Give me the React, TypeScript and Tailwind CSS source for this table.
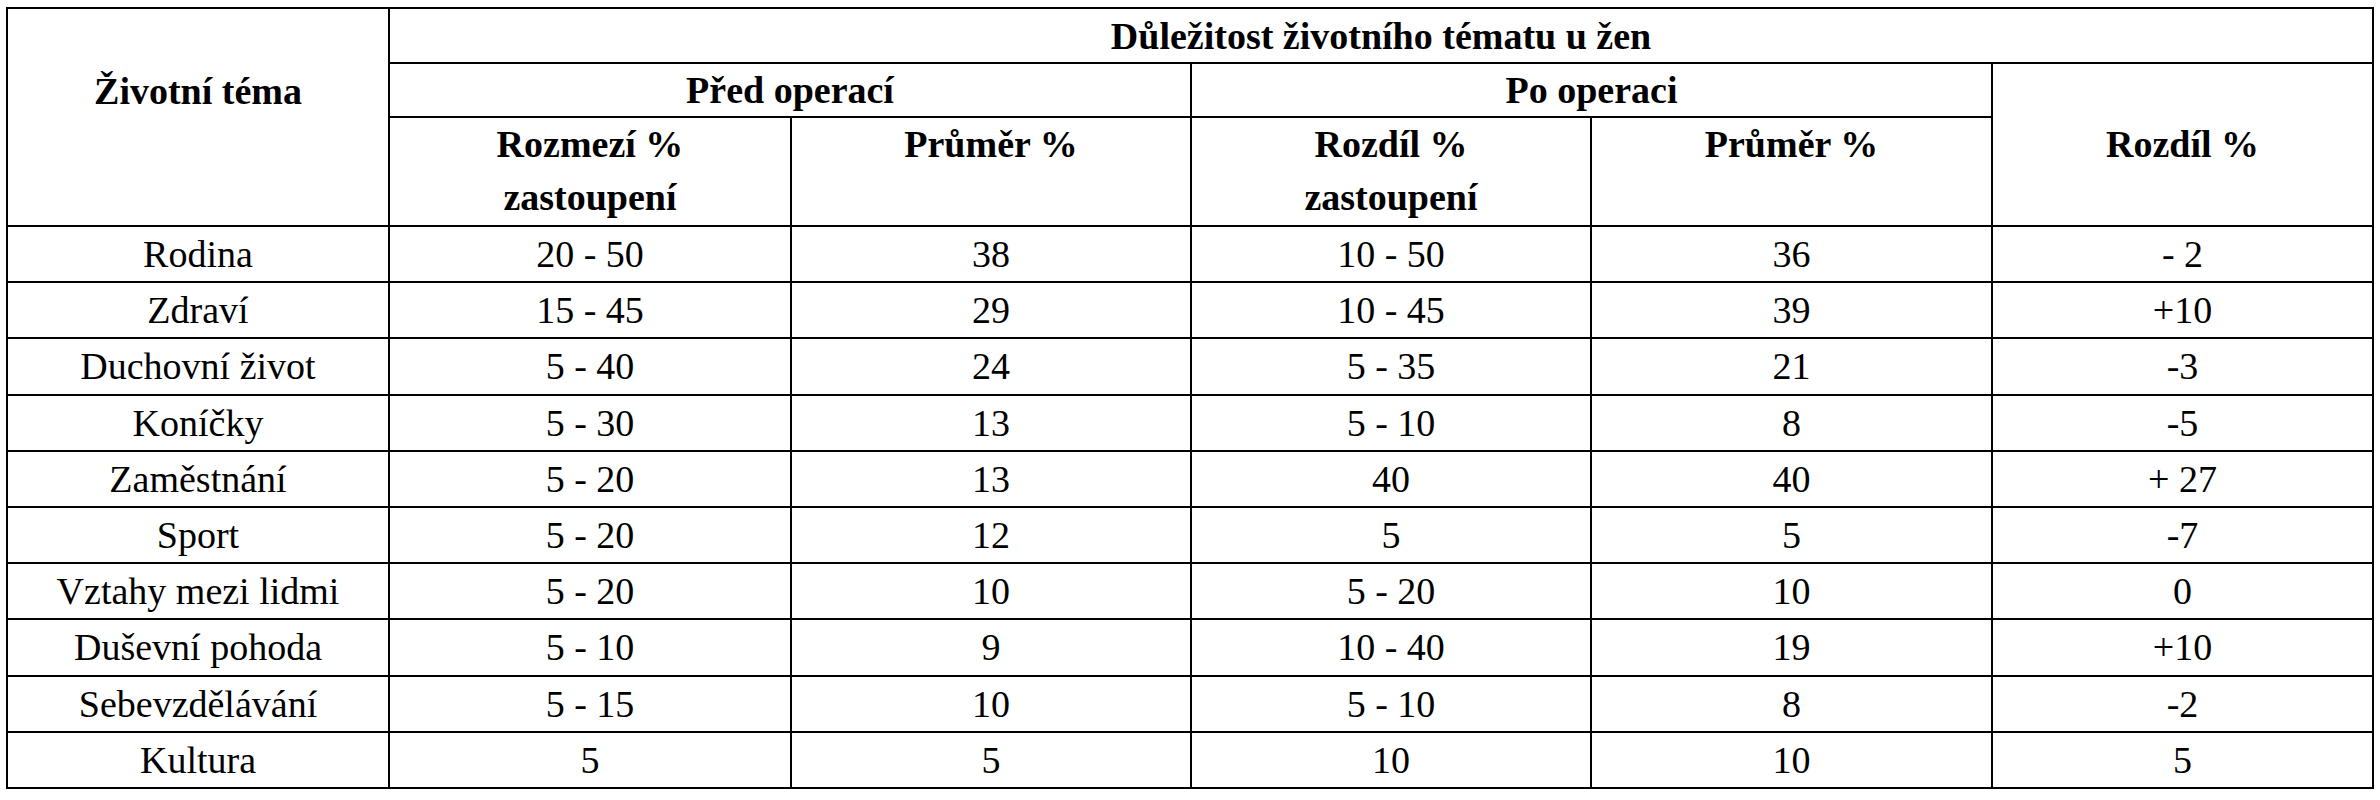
const rows: string[][] = [
  ["Rodina", "20 - 50", "38", "10 - 50", "36", "- 2"],
  ["Zdraví", "15 - 45", "29", "10 - 45", "39", "+10"],
  ["Duchovní život", "5 - 40", "24", "5 - 35", "21", "-3"],
  ["Koníčky", "5 - 30", "13", "5 - 10", "8", "-5"],
  ["Zaměstnání", "5 - 20", "13", "40", "40", "+ 27"],
  ["Sport", "5 - 20", "12", "5", "5", "-7"],
  ["Vztahy mezi lidmi", "5 - 20", "10", "5 - 20", "10", "0"],
  ["Duševní pohoda", "5 - 10", "9", "10 - 40", "19", "+10"],
  ["Sebevzdělávání", "5 - 15", "10", "5 - 10", "8", "-2"],
  ["Kultura", "5", "5", "10", "10", "5"],
];

const th = "border-2 border-black font-bold font-[Liberation_Serif]";

export default function App() {
  return (
    <div className="w-[2380px] h-[800px] bg-white pl-[6px] pt-[7px] text-black font-[Liberation_Serif]">
      <table className="table-fixed border-collapse w-[2366px] text-[38px] border-2 border-black font-[Liberation_Serif]">
        <colgroup>
          <col className="w-[382px]" />
          <col className="w-[402px]" />
          <col className="w-[400px]" />
          <col className="w-[400px]" />
          <col className="w-[401px]" />
          <col className="w-[381px]" />
        </colgroup>
        <thead>
          <tr className="h-[55px]">
            <th rowSpan={3} className={`${th} align-top pt-[56px] leading-[53px]`}>
              Životní téma
            </th>
            <th colSpan={5} className={`${th} leading-[50px]`}>
              Důležitost životního tématu u žen
            </th>
          </tr>
          <tr className="h-[54px]">
            <th colSpan={2} className={`${th} leading-[50px]`}>
              Před operací
            </th>
            <th colSpan={2} className={`${th} leading-[50px]`}>
              Po operaci
            </th>
            <th rowSpan={2} className={`${th} align-middle`}>
              Rozdíl %
            </th>
          </tr>
          <tr className="h-[109px]">
            <th className={`${th} align-top leading-[53px]`}>
              Rozmezí %
              <br />
              zastoupení
            </th>
            <th className={`${th} align-top leading-[53px]`}>Průměr %</th>
            <th className={`${th} align-top leading-[53px]`}>
              Rozdíl %
              <br />
              zastoupení
            </th>
            <th className={`${th} align-top leading-[53px]`}>Průměr %</th>
          </tr>
        </thead>
        <tbody>
          {rows.map((r) => (
            <tr key={r[0]} className="h-[56.2px]">
              {r.map((c, i) => (
                <td key={i} className="border-2 border-black text-center leading-[50px] font-[Liberation_Serif]">
                  {c}
                </td>
              ))}
            </tr>
          ))}
        </tbody>
      </table>
    </div>
  );
}
